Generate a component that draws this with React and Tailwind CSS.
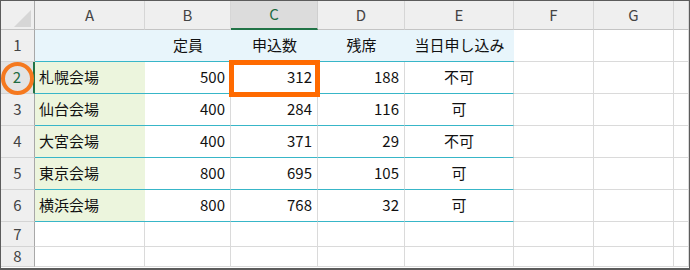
import React from 'react';

const colLetters = ['A', 'B', 'C', 'D', 'E', 'F', 'G', ''];

const rows = [
  ['', '定員', '申込数', '残席', '当日申し込み'],
  ['札幌会場', '500', '312', '188', '不可'],
  ['仙台会場', '400', '284', '116', '可'],
  ['大宮会場', '400', '371', '29', '不可'],
  ['東京会場', '800', '695', '105', '可'],
  ['横浜会場', '800', '768', '32', '可'],
  ['', '', '', '', ''],
  ['', '', '', '', ''],
];

const font = { fontFamily: '"Noto Sans CJK JP", "Noto Sans", sans-serif' };

function ColHeader({ label, index }) {
  // column C is the active column
  const selected = index === 2;
  return (
    <div
      className={
        selected
          ? 'flex items-center justify-center bg-[#dcdcdc] border-b-2 border-b-[#217346] border-r border-r-[#cfcfcf] text-[15px] text-[#1e6b42]'
          : 'flex items-center justify-center bg-[#efefef] border-b border-b-[#c4c4c4] border-r border-r-[#d6d6d6] text-[15px] text-[#444]'
      }
    >
      {label}
    </div>
  );
}

function RowHeader({ n }) {
  const selected = n === 2;
  return (
    <div
      className={
        selected
          ? 'flex items-center justify-center bg-[#e3e3e3] border-b border-b-[#d4d4d4] border-r-2 border-r-[#217346] text-[15px] text-[#1e6b42]'
          : 'flex items-center justify-center bg-[#efefef] border-b border-b-[#d4d4d4] border-r border-r-[#a8a8a8] text-[15px] text-[#444]'
      }
    >
      {n}
    </div>
  );
}

function Cell({ r, c, value }) {
  const inTable = r <= 5 && c <= 4;
  let cls = 'flex items-center text-[15px] text-[#111] whitespace-nowrap ';
  if (inTable && r === 0) {
    cls += 'bg-[#e8f5fb] border-b border-b-[#38b6c8] justify-center';
  } else if (inTable && c === 0) {
    cls += 'bg-[#ecf5dd] border-b border-b-[#38b6c8] justify-start pl-1';
  } else if (inTable && c === 4) {
    cls += 'bg-white border-r border-r-[#dadada] border-b border-b-[#38b6c8] justify-center';
  } else if (inTable) {
    cls += 'bg-white border-r border-r-[#dadada] border-b border-b-[#38b6c8] justify-end pr-[5px]';
  } else {
    cls += 'bg-white border-r border-r-[#dadada] border-b border-b-[#dadada]';
  }
  return <div className={cls}>{value}</div>;
}

export default function App() {
  return (
    <div className="relative w-[690px] h-[270px] overflow-hidden bg-white border-l border-r border-t border-b-2 border-[#5c5c5c]" style={font}>
      <div className="grid grid-cols-[34px_110px_86px_87px_87px_109px_80px_80px_15px] grid-rows-[29px_32px_32px_32px_32px_32px_32px_25px_20px]">
        {/* corner with select-all triangle */}
        <div className="relative bg-[#efefef] border-b border-b-[#c4c4c4] border-r border-r-[#a8a8a8]">
          <svg className="absolute left-[13px] top-[9px]" width="18" height="18" viewBox="0 0 18 18">
            <polygon points="17,0 17,17 0,17" fill="#d6d6d6" />
          </svg>
        </div>
        {colLetters.map((l, i) => (
          <ColHeader key={i} label={l} index={i} />
        ))}
        {rows.map((row, r) => (
          <React.Fragment key={r}>
            <RowHeader n={r + 1} />
            {[0, 1, 2, 3, 4, 5, 6, 7].map((c) => (
              <Cell key={c} r={r} c={c} value={row[c] || ''} />
            ))}
          </React.Fragment>
        ))}
      </div>

      {/* orange highlight on C2 */}
      <div className="absolute left-[228px] top-[59px] w-[91px] h-[37px] border-[5px] border-[#ff6a00]" />
      {/* orange circle on row 2 header */}
      <div className="absolute left-0 top-[61px] w-[33px] h-[33px] rounded-full border-[4px] border-[#f5791f]" />
    </div>
  );
}
